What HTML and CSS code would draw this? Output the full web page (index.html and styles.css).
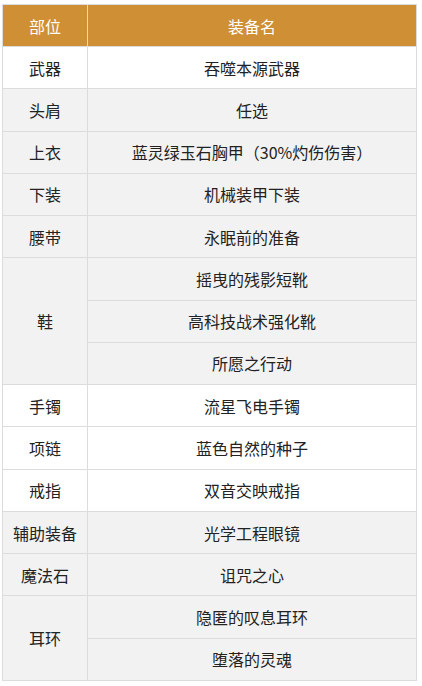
FILE: index.html
```html
<!DOCTYPE html>
<html lang="zh-CN">
<head>
<meta charset="utf-8">
<title>装备</title>
<link rel="stylesheet" href="styles.css">
</head>
<body>
<table class="gear">
  <colgroup><col class="c1"><col class="c2"></colgroup>
  <thead>
    <tr class="head"><th>部位</th><th>装备名</th></tr>
  </thead>
  <tbody>
    <tr class="w"><td>武器</td><td>吞噬本源武器</td></tr>
    <tr class="g"><td>头肩</td><td>任选</td></tr>
    <tr class="g"><td>上衣</td><td>蓝灵绿玉石胸甲（30%灼伤伤害）</td></tr>
    <tr class="g"><td>下装</td><td>机械装甲下装</td></tr>
    <tr class="g"><td>腰带</td><td>永眠前的准备</td></tr>
    <tr class="g"><td rowspan="3">鞋</td><td>摇曳的残影短靴</td></tr>
    <tr class="g"><td>高科技战术强化靴</td></tr>
    <tr class="g"><td>所愿之行动</td></tr>
    <tr class="w"><td>手镯</td><td>流星飞电手镯</td></tr>
    <tr class="w"><td>项链</td><td>蓝色自然的种子</td></tr>
    <tr class="w"><td>戒指</td><td>双音交映戒指</td></tr>
    <tr class="g"><td>辅助装备</td><td>光学工程眼镜</td></tr>
    <tr class="g"><td>魔法石</td><td>诅咒之心</td></tr>
    <tr class="g"><td rowspan="2">耳环</td><td>隐匿的叹息耳环</td></tr>
    <tr class="g"><td>堕落的灵魂</td></tr>
  </tbody>
</table>
</body>
</html>
```
FILE: styles.css
```css
html, body {
  margin: 0;
  padding: 0;
  background: #ffffff;
}
body {
  padding: 4px 0 0 2px;
  font-family: "Noto Sans CJK SC", "Noto Sans", sans-serif;
  font-size: 16px;
  color: #222222;
}
.gear {
  border-collapse: collapse;
  table-layout: fixed;
  width: 415px;
}
.c1 { width: 85px; }
.gear th, .gear td {
  border: 1px solid #dcdcdc;
  text-align: center;
  vertical-align: middle;
  padding: 0;
  line-height: 20px;
}
.head th {
  background: #cf8f35;
  color: #ffffff;
  font-weight: normal;
}
.head th + th {
  border-left-color: #e8c9a0;
}
.head { height: 42px; }
tbody tr { height: 42.27px; }
.w td { background: #ffffff; }
.g td { background: #f2f2f2; }
```
